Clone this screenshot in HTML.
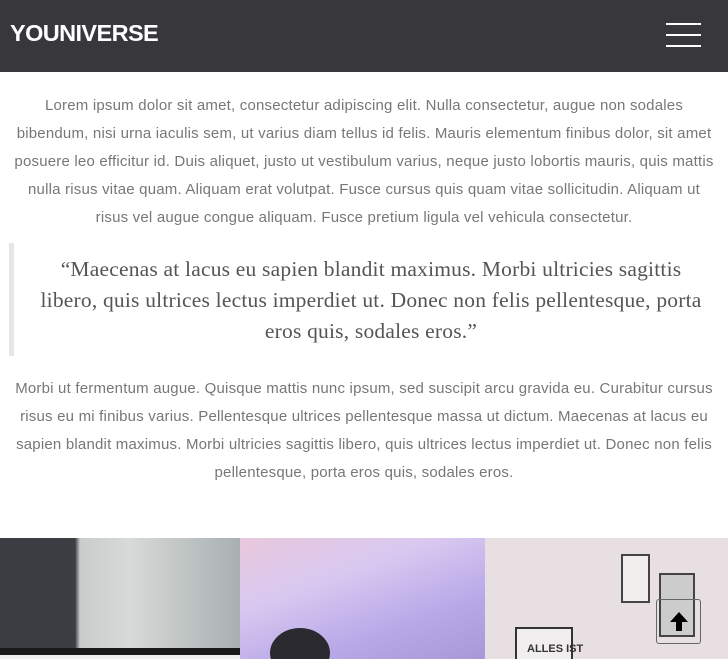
<!DOCTYPE html>
<html><head><style>
*{margin:0;padding:0;box-sizing:border-box}
html,body{width:728px;height:659px;overflow:hidden}
body{background:#fff;font-family:"Liberation Sans",sans-serif;position:relative}
.hdr{position:absolute;left:0;top:0;width:728px;height:72px;background:#38373c}
.logo{position:absolute;left:10px;top:20px;color:#fff;font-weight:bold;font-size:23.5px;letter-spacing:-0.6px}
.bar{position:absolute;left:666px;width:35px;height:2px;background:#fff}
p.t{position:absolute;left:0;width:728px;text-align:center;color:#777;font-size:15px;line-height:28px;letter-spacing:0.2px;white-space:nowrap}
.q{position:absolute;left:9px;top:243px;width:711px;height:113px;border-left:5px solid #e6e6e6;text-align:center;font-family:"Liberation Serif",serif;font-size:21.5px;line-height:31px;color:#555;padding-top:11px;padding-left:8px;white-space:nowrap;letter-spacing:0.2px}
.img{position:absolute;top:538px;height:121px;overflow:hidden}
</style></head><body>
<div class="hdr"><div class="logo">YOUNIVERSE</div>
<div class="bar" style="top:23px"></div><div class="bar" style="top:34px"></div><div class="bar" style="top:45px"></div></div>
<p class="t" style="top:92px">Lorem ipsum dolor sit amet, consectetur adipiscing elit. Nulla consectetur, augue non sodales<br>bibendum, nisi urna iaculis sem, ut varius diam tellus id felis. Mauris elementum finibus dolor, sit amet<br>posuere leo efficitur id. Duis aliquet, justo ut vestibulum varius, neque justo lobortis mauris, quis mattis<br>nulla risus vitae quam. Aliquam erat volutpat. Fusce cursus quis quam vitae sollicitudin. Aliquam ut<br>risus vel augue congue aliquam. Fusce pretium ligula vel vehicula consectetur.</p>
<div class="q">“Maecenas at lacus eu sapien blandit maximus. Morbi ultricies sagittis<br>libero, quis ultrices lectus imperdiet ut. Donec non felis pellentesque, porta<br>eros quis, sodales eros.”</div>
<p class="t" style="top:375px">Morbi ut fermentum augue. Quisque mattis nunc ipsum, sed suscipit arcu gravida eu. Curabitur cursus<br>risus eu mi finibus varius. Pellentesque ultrices pellentesque massa ut dictum. Maecenas at lacus eu<br>sapien blandit maximus. Morbi ultricies sagittis libero, quis ultrices lectus imperdiet ut. Donec non felis<br>pellentesque, porta eros quis, sodales eros.</p>
<div class="img" style="left:0;width:240px;background:linear-gradient(90deg,#3a3e42 0,#3a3e42 75px,#c8ccca 80px,#d6dad8 130px,#a9b0b0 240px)">
<div style="position:absolute;left:0;top:110px;width:240px;height:11px;background:#1a1a1a"></div>
<div style="position:absolute;left:0;top:117px;width:240px;height:4px;background:#eee"></div></div>
<div class="img" style="left:240px;width:245px;background:linear-gradient(160deg,#e8c8dc 0,#d8c8f0 35%,#b8a8e8 70%,#a898d8 100%)">
<div style="position:absolute;left:30px;top:90px;width:60px;height:50px;border-radius:50%;background:#2a2a30"></div></div>
<div class="img" style="left:485px;width:243px;background:#e8dfe2">
<div style="position:absolute;left:136px;top:16px;width:29px;height:49px;border:2px solid #444;background:#f2eeee"></div>
<div style="position:absolute;left:174px;top:35px;width:36px;height:64px;border:2px solid #444;background:#ccc"></div>
<div style="position:absolute;left:30px;top:89px;width:58px;height:40px;border:2px solid #333;background:#f0eeee;font-size:11px;font-weight:bold;color:#333;padding:14px 0 0 10px;white-space:nowrap">ALLES IST</div></div>
<div style="position:absolute;left:656px;top:599px;width:45px;height:45px;border:1px solid #666;border-radius:3px">
<svg width="45" height="45" viewBox="0 0 45 45" style="position:absolute;left:0;top:0"><path d="M22 12 L31 22 L25 22 L25 31 L19 31 L19 22 L13 22 Z" fill="#000"/></svg></div>
</body></html>
